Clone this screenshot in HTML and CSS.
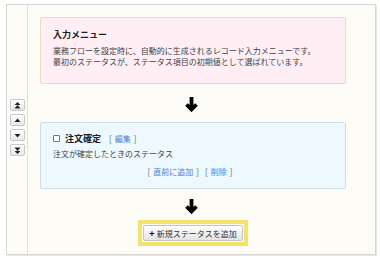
FILE: index.html
```html
<!DOCTYPE html>
<html lang="ja">
<head>
<meta charset="utf-8">
<link rel="stylesheet" href="styles.css">
</head>
<body>
<div class="page">
  <div class="frame">
    <div class="side">
      <button class="mv" type="button"><svg width="7" height="7" viewBox="0 0 7 7"><path d="M3.5 0 L6.5 3 H0.5 Z M3.5 3 L6.5 6.5 H0.5 Z" fill="#222"/></svg></button>
      <button class="mv" type="button"><svg width="7" height="7" viewBox="0 0 7 7"><path d="M3.5 1.5 L6.5 5 H0.5 Z" fill="#222"/></svg></button>
      <button class="mv" type="button"><svg width="7" height="7" viewBox="0 0 7 7"><path d="M0.5 2 H6.5 L3.5 5.5 Z" fill="#222"/></svg></button>
      <button class="mv" type="button"><svg width="7" height="7" viewBox="0 0 7 7"><path d="M0.5 0.5 H6.5 L3.5 4 Z M0.5 4 H6.5 L3.5 7 Z" fill="#222"/></svg></button>
    </div>
    <div class="main">
      <div class="card card-pink">
        <div class="card-title">入力メニュー</div>
        <div class="card-text">業務フローを設定時に、自動的に生成されるレコード入力メニューです。</div>
        <div class="card-text">最初のステータスが、ステータス項目の初期値として選ばれています。</div>
      </div>
      <div class="arrow arrow-1">
        <svg width="13" height="15" viewBox="0 0 13 15"><path d="M6.5 0 V12.5 M1.5 7.5 L6.5 12.5 L11.5 7.5" fill="none" stroke="#000" stroke-width="3.8" stroke-linecap="butt" stroke-linejoin="miter"/></svg>
      </div>
      <div class="card card-blue">
        <div class="status-head">
          <input class="chk" type="checkbox">
          <span class="status-name">注文確定</span>
          <span class="br">[</span><a class="lnk" href="#">編集</a><span class="br">]</span>
        </div>
        <div class="card-text status-desc">注文が確定したときのステータス</div>
        <div class="status-actions">
          <span class="br">[</span><a class="lnk" href="#">直前に追加</a><span class="br">]</span>
          <span class="br">[</span><a class="lnk" href="#">削除</a><span class="br">]</span>
        </div>
      </div>
      <div class="arrow arrow-2">
        <svg width="13" height="15" viewBox="0 0 13 15"><path d="M6.5 0 V12.5 M1.5 7.5 L6.5 12.5 L11.5 7.5" fill="none" stroke="#000" stroke-width="3.8" stroke-linecap="butt" stroke-linejoin="miter"/></svg>
      </div>
      <div class="add-row">
        <div class="add-hl">
          <button class="add-btn" type="button"><span class="plus">+</span>新規ステータスを追加</button>
        </div>
      </div>
    </div>
  </div>
</div>
</body>
</html>
```
FILE: styles.css
```css
html, body {
  margin: 0;
  padding: 0;
  background: #ffffff;
}
body {
  font-family: "Noto Sans CJK JP", "Noto Sans", sans-serif;
  color: #333;
}
.page {
  padding: 4px 4px 4px 6px;
}
.frame {
  display: flex;
  height: 251px;
  box-sizing: border-box;
  border: 1px solid #d6d6d6;
  box-shadow: 1px 1px 0 #e6e6e6;
  background: #fdfcf6;
}
.side {
  width: 21px;
  border-right: 1px solid #e6e3d6;
  display: flex;
  flex-direction: column;
  align-items: center;
  justify-content: center;
  gap: 3px;
  padding-bottom: 4px;
  box-sizing: border-box;
}
.mv {
  width: 15px;
  height: 12px;
  padding: 0;
  margin: 0;
  border: 1px solid #c8c8c8;
  border-radius: 2px;
  background: linear-gradient(#ffffff, #e8e8e8);
  display: flex;
  align-items: center;
  justify-content: center;
}
.mv svg { display: block; }
.main {
  flex: 1;
  padding: 12px 29px 0 12px;
  display: flex;
  flex-direction: column;
}
.card {
  border: 1px solid;
  border-radius: 2px;
}
.card-pink {
  background: #ffeef4;
  border-color: #eadccb;
  padding: 11px 12px 16px;
}
.card-blue {
  background: #eef8ff;
  border-color: #cfdde6;
  padding: 9px 12px 10px;
}
.card-title {
  font-size: 9px;
  font-weight: bold;
  line-height: 12px;
  color: #222;
  margin-bottom: 4px;
}
.card-text {
  font-size: 8px;
  line-height: 11px;
  color: #444;
  white-space: nowrap;
}
.arrow {
  display: flex;
  justify-content: center;
  padding-right: 4px;
}
.arrow svg { display: block; }
.arrow-1 { padding-top: 13px; padding-bottom: 10px; }
.arrow-2 { padding-top: 10px; padding-bottom: 6px; }
.status-head {
  display: flex;
  align-items: center;
  height: 12px;
  font-size: 8px;
}
.chk {
  appearance: none;
  -webkit-appearance: none;
  width: 7px;
  height: 7px;
  margin: 0 5px 0 0;
  border: 1px solid #777;
  border-radius: 1px;
  background: #fff;
}
.status-name {
  font-size: 9px;
  font-weight: bold;
  color: #222;
  margin-right: 5px;
}
.br {
  color: #666;
  font-size: 8px;
  margin: 0 3px;
}
.lnk {
  color: #4a80d0;
  text-decoration: none;
  font-size: 8px;
}
.status-desc {
  margin-top: 4px;
}
.status-actions {
  margin-top: 7px;
  height: 12px;
  line-height: 12px;
  display: flex;
  justify-content: center;
  align-items: center;
  padding-right: 6px;
}
.add-row {
  display: flex;
  justify-content: center;
}
.add-hl {
  border: 4px solid #f3e26e;
  padding: 1px;
  background: #fdfcf6;
}
.add-btn {
  height: 16px;
  padding: 0 5px;
  margin: 0;
  border: 1px solid #c4c4c4;
  border-radius: 2px;
  background: linear-gradient(#ffffff, #e4e4e4);
  font-family: "Noto Sans CJK JP", "Noto Sans", sans-serif;
  font-size: 8px;
  color: #333;
  display: flex;
  align-items: center;
  white-space: nowrap;
}
.plus {
  font-weight: bold;
  color: #000;
  font-size: 9px;
  margin-right: 2px;
}
```
